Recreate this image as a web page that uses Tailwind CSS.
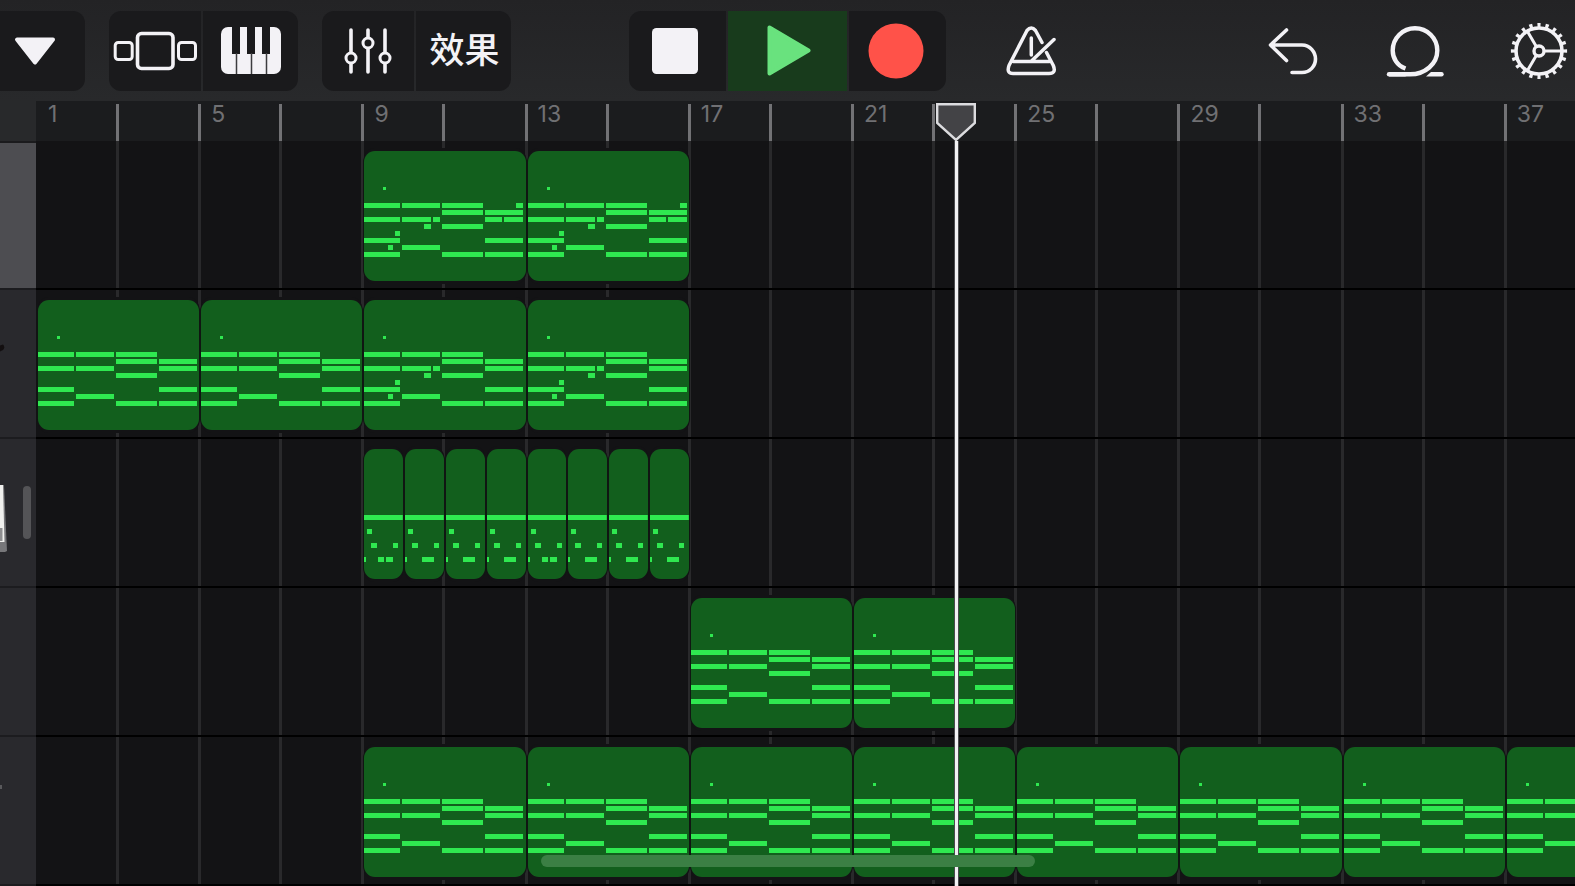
<!DOCTYPE html>
<html lang="zh-CN">
<head>
<meta charset="utf-8">
<title>Tracks</title>
<script src="https://cdn.jsdelivr.net/npm/@tailwindcss/browser@4"></script>
</head>
<body class="flex h-screen flex-col overflow-hidden bg-[#131315] font-['Inter','Noto_Sans_CJK_SC',sans-serif] text-[#f3f2f6]">

<svg class="hidden" aria-hidden="true">
  <symbol id="chords" viewBox="0 0 161 130" preserveAspectRatio="none">
    <path d="M0 52h36v5H0zM38 52h38v5H38zM78 52h41v5H78zM78 59h41v5H78zM121 59h38v5H121zM0 66h36v5H0zM38 66h38v5H38zM121 66h38v5H121zM78 73h41v5H78zM0 87h36v5H0zM121 87h38v5H121zM38 94h38v5H38zM0 101h36v5H0zM78 101h41v5H78zM121 101h38v5H121z"/>
    <circle cx="20.5" cy="37.5" r="1.5"/>
  </symbol>
  <symbol id="melody" viewBox="0 0 161 130" preserveAspectRatio="none">
    <path d="M0 52h36v5H0zM38 52h38v5H38zM78 52h41v5H78zM78 59h41v5H78zM121 59h38v5H121zM0 66h36v5H0zM38 66h29v5H38zM69 66h7v5H69zM121 66h38v5H121zM60 73h7v5H60zM78 73h41v5H78zM31 80h5v5H31zM0 87h36v5H0zM121 87h38v5H121zM24 94h5v5H24zM38 94h38v5H38zM0 101h36v5H0zM78 101h41v5H78zM121 101h38v5H121z"/>
    <circle cx="20.5" cy="37.5" r="1.5"/>
  </symbol>
  <symbol id="lead" viewBox="0 0 161 130" preserveAspectRatio="none">
    <path d="M0 52h36v5H0zM38 52h38v5H38zM78 52h41v5H78zM152 52h7v5H152zM78 59h41v5H78zM121 59h38v5H121zM0 66h36v5H0zM38 66h29v5H38zM69 66h7v5H69zM121 66h17v5H121zM140 66h19v5H140zM60 73h7v5H60zM78 73h41v5H78zM31 80h5v5H31zM0 87h36v5H0zM121 87h38v5H121zM24 94h5v5H24zM38 94h38v5H38zM0 101h36v5H0zM78 101h41v5H78zM121 101h38v5H121z"/>
    <circle cx="20.5" cy="37.5" r="1.5"/>
  </symbol>
  <symbol id="beatA" viewBox="0 0 39 130" preserveAspectRatio="none">
    <path d="M0 66h39v5H0zM3 80h5v5H3zM7 94h6v5H7zM29 94h5v5H29zM0 108h2v5H0zM14 108h6v5H14zM22 108h7v5H22z"/>
  </symbol>
  <symbol id="beatB" viewBox="0 0 39 130" preserveAspectRatio="none">
    <path d="M0 66h39v5H0zM3 80h5v5H3zM7 94h6v5H7zM29 94h5v5H29zM0 108h2v5H0zM17 108h12v5H17z"/>
  </symbol>
</svg>

<header class="flex h-[101px] shrink-0 items-center bg-linear-to-b from-[#232325] to-[#28292b] pr-[7px]">
  <button aria-label="菜单" class="flex h-20 w-[85px] items-center rounded-r-xl bg-[#1a1a1c] pl-3.5">
    <svg width="42" height="30" viewBox="0 0 42 30" fill="currentColor" stroke="currentColor" stroke-width="4" stroke-linejoin="round"><path d="M3 3.500H39L21 26.500Z"/></svg>
  </button>
  <div class="ml-6 flex gap-0.5">
    <button aria-label="浏览器" class="flex h-20 w-[92px] items-center justify-center rounded-l-xl bg-[#1a1a1c]">
      <svg width="84" height="40" viewBox="0 0 84 40" fill="none" stroke="currentColor" stroke-width="3"><rect x="2.200" y="11.500" width="17" height="17" rx="3"/><rect x="24.500" y="2.500" width="35.500" height="35" rx="4" stroke-width="3.600"/><rect x="65.500" y="11.500" width="17" height="17" rx="3"/></svg>
    </button>
    <button aria-label="键盘" class="flex h-20 w-[95px] items-center justify-center rounded-r-xl bg-[#1a1a1c]">
      <svg width="60" height="47" viewBox="0 0 60 47"><rect width="60" height="47" rx="7" fill="#f3f2f6"/><path d="M11 0h8v27h-8zM26 0h8v27h-8zM41 0h8v27h-8z" fill="#1a1a1c"/><path d="M15.500 26v21M30.500 26v21M45.500 26v21" stroke="#3c3c3f" stroke-width="1.500"/></svg>
    </button>
  </div>
  <div class="ml-6 flex gap-0.5">
    <button aria-label="音轨控制" class="flex h-20 w-[92px] items-center justify-center rounded-l-xl bg-[#1a1a1c]">
      <svg width="48" height="46" viewBox="0 0 48 46" fill="none" stroke="currentColor" stroke-width="3.600" stroke-linecap="round"><path d="M7 2v22M7 36v8M24 2v7M24 21v23M41 2v22M41 36v8"/><circle cx="7" cy="30" r="5" stroke-width="3"/><circle cx="24" cy="15" r="5" stroke-width="3"/><circle cx="41" cy="30" r="5" stroke-width="3"/></svg>
    </button>
    <button class="h-20 w-[95px] rounded-r-xl bg-[#1a1a1c] pl-0.5 text-[35px] font-medium">效果</button>
  </div>
  <div class="flex-[118_1_0%]"></div>
  <div class="flex gap-0.5">
    <button aria-label="停止" class="flex h-20 w-[97px] items-center justify-center rounded-l-xl bg-[#1a1a1c] pr-1">
      <svg width="46" height="46" viewBox="0 0 46 46"><rect width="46" height="46" rx="4.500" fill="#f3f2f6"/></svg>
    </button>
    <button aria-label="播放" class="flex h-20 w-[119px] items-center justify-center bg-[#183b1c] pl-1">
      <svg width="44" height="51" viewBox="0 0 44 51" fill="#69e27e" stroke="#69e27e" stroke-width="4" stroke-linejoin="round"><path d="M2.500 2.500V48.500L41.500 25.500Z"/></svg>
    </button>
    <button aria-label="录音" class="flex h-20 w-[97px] items-center justify-center rounded-r-xl bg-[#1a1a1c] pr-0.5">
      <svg width="56" height="56" viewBox="0 0 56 56"><circle cx="28" cy="28" r="27.500" fill="#ff5249"/></svg>
    </button>
  </div>
  <button aria-label="节拍器" class="ml-[60px] flex">
    <svg width="50" height="50" viewBox="0 0 50 50" fill="none" stroke="currentColor" stroke-width="3.500" stroke-linecap="round" stroke-linejoin="round"><path d="M36 16.500L29.500 4.500Q25.300 -.5 21 4.500L3 39.500Q.2 47.500 7 47.500H43Q50.500 47.500 47.300 39.500L40.500 26.500"/><path d="M7 35.500H43.500M25.300 12V29M48 13.500L26 34.500"/></svg>
  </button>
  <div class="flex-[213_1_0%]"></div>
  <div class="flex items-center">
    <button aria-label="撤销" class="flex">
      <svg width="50" height="50" viewBox="0 0 50 50" fill="none" stroke="currentColor" stroke-width="3.600" stroke-linecap="round" stroke-linejoin="round"><path d="M18.500 4L2.500 19L18.500 34.500M3 19H34C42 19 47.500 26 47.500 33S42 46.500 34 46.500H24"/></svg>
    </button>
    <button aria-label="循环" class="ml-[67px] flex">
      <svg width="60" height="54" viewBox="0 0 60 54" fill="none" stroke="currentColor" stroke-width="4.400"><path d="M20.500 44.500C12 41.500 7.700 34 7.700 26.500A22.300 22.300 0 1 1 52.300 26.500C52.300 40 40 50.300 25 50.300H4"/><path d="M4 50.300H20" stroke-linecap="round"/><path d="M46 48.100H56.500A2.200 2.200 0 0 1 56.500 52.500H41Z" fill="currentColor" stroke="none"/></svg>
    </button>
    <button aria-label="设置" class="ml-[65px] flex">
      <svg width="58" height="58" viewBox="0 0 58 58" fill="none" stroke="currentColor"><circle cx="29" cy="29" r="23" stroke-width="3.600"/><circle cx="29" cy="29" r="26" stroke-width="4.200" stroke-dasharray="3.200 4.968" stroke-dashoffset="1.600" pathLength="163.360"/><circle cx="29" cy="29" r="5" stroke-width="3.400"/><path d="M35 29H51M26 24L17.500 9.500M26 34L17.500 48.500" stroke-width="3"/></svg>
    </button>
  </div>
</header>

<main class="flex min-h-0 flex-1">
  <aside class="w-9 shrink-0 overflow-hidden bg-[#29292d]">
    <div class="h-10 bg-[#28292b]"></div>
    <div class="h-[149px] border-t-2 border-b-2 border-t-[#1b1b1d] border-b-[#1c1c1f] bg-[#4d4d51]"></div>
    <div class="flex h-[149px] items-center border-b-2 border-[#1c1c1f] pb-8">
      <svg width="5" height="8" viewBox="0 0 5 8"><path d="M0 1.500L3 .5Q5.500 3 3 6L0 7.500Z" fill="#130f10"/></svg>
    </div>
    <div class="flex h-[149px] items-center justify-between border-b-2 border-[#1c1c1f] pr-[5px]">
      <svg class="mt-3" width="8" height="68" viewBox="0 0 8 68"><path d="M0 0H4L7 66L5 67H0Z" fill="#77777a"/><path d="M0 0H3L4.500 57H0Z" fill="#f0f0ee"/><path d="M0 43H2.500V56H0Z" fill="#8e8e90"/></svg>
      <span class="h-[53px] w-2 rounded-full bg-[#545457]"></span>
    </div>
    <div class="h-[149px] border-b-2 border-[#1c1c1f]"></div>
    <div class="flex h-[149px] items-center border-b-2 border-[#1c1c1f] pb-12">
      <span class="h-1 w-0.5 bg-[#59595c]"></span>
    </div>
  </aside>

  <section class="relative min-w-0 flex-1 overflow-hidden">
    <div class="h-10 bg-[#1b1c1e]">
      <div id="ruler" class="grid h-full w-[1633px] grid-cols-10 pl-px pt-[3px] text-[23px] leading-5 text-[#707073]"></div>
    </div>
    <div class="relative">
      <div id="lines" class="absolute inset-y-0 left-0 grid w-[1633px] grid-cols-10 pl-px"></div>
      <div id="tracks" class="relative"></div>
    </div>
    <div class="absolute inset-y-0 left-[900px] flex w-10 flex-col items-center pt-0.5">
      <svg class="shrink-0" width="40" height="38" viewBox="0 0 40 38"><path d="M1.200 1.200H38.800V20L20 37L1.200 20Z" fill="#434346" stroke="#dcdcdf" stroke-width="2.400"/></svg>
      <div class="w-[5px] flex-1 border-x border-[#4a4a4d] bg-[#f1f1f3]"></div>
    </div>
    <div class="absolute bottom-[19px] left-[505px] h-3 w-[494px] rounded-full bg-[#3b7f44]"></div>
  </section>
</main>

<script>
  const cells = Array.from({ length: 10 }, (_, i) => 1 + i * 4);

  document.getElementById('ruler').innerHTML = cells.map(bar =>
    `<div class="-ml-0.5 ${bar === 1 ? '' : 'border-l-[3px]'} border-[#727275]">
       <div class="${bar === 1 ? 'w-[84px] pl-[13px]' : 'w-[81px] pl-2.5'} h-full border-r-[3px] border-[#727275]">${bar}</div>
     </div>`).join('');

  document.getElementById('lines').innerHTML = cells.map(bar =>
    `<div class="-ml-0.5 ${bar === 1 ? '' : 'border-l-[3px]'} border-[#29292b]">
       <div class="${bar === 1 ? 'w-[84px]' : 'w-[81px]'} h-full border-r-[3px] border-[#29292b]"></div>
     </div>`).join('');

  // Each region: [start bar, notes]
  const tracks = [
    { span: 'span 4', regions: [[9, 'lead'], [13, 'lead']] },
    { span: 'span 4', regions: [[1, 'chords'], [5, 'chords'], [9, 'melody'], [13, 'melody']] },
    { span: 'span 1', regions: [[9, 'beatA'], [10, 'beatB'], [11, 'beatB'], [12, 'beatB'], [13, 'beatA'], [14, 'beatB'], [15, 'beatB'], [16, 'beatB']] },
    { span: 'span 4', regions: [[17, 'chords'], [21, 'chords']] },
    { span: 'span 4', regions: [9, 13, 17, 21, 25, 29, 33, 37].map(b => [b, 'chords']) },
  ];

  document.getElementById('tracks').innerHTML = tracks.map(t =>
    `<div class="h-[149px] border-b-2 border-black">
       <div class="grid h-full w-[1633px] grid-cols-40 pt-2.5 pb-[7px] pl-px">
       ${t.regions.map(([bar, notes]) =>
         `<div class="row-start-1 mx-px overflow-hidden rounded-[11px] bg-[#125f1d] shadow-[0_-3px_0_#131315,0_3px_0_#131315,0_0_0_1px_#101612]" style="grid-column:${bar} / ${t.span}">
            <svg class="block h-[130px] w-full fill-[#2fe850]" shape-rendering="crispEdges"><use href="#${notes}" width="100%" height="100%"/></svg>
          </div>`).join('')}
       </div>
     </div>`).join('');
</script>
</body>
</html>
